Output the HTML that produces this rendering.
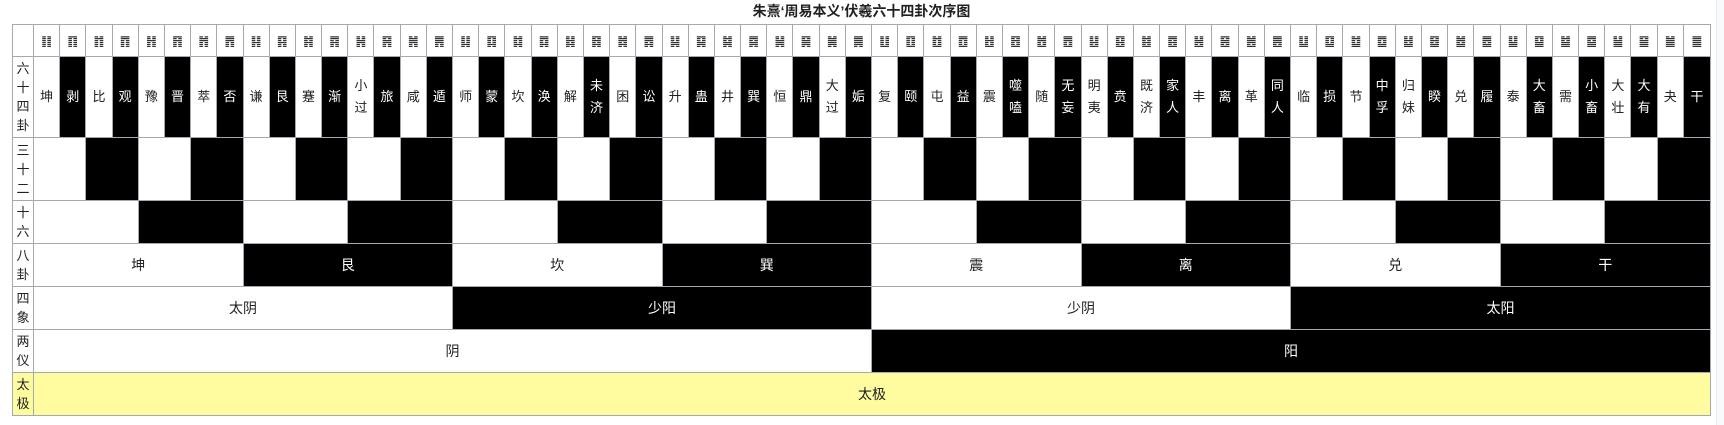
<!DOCTYPE html>
<html><head><meta charset="utf-8"><style>
html,body{margin:0;padding:0;background:#fff;width:1724px;height:425px;overflow:hidden;font-family:"Liberation Sans","Noto Sans CJK SC",sans-serif;color:#202122}
.sb{position:absolute;left:1716px;top:0;width:8px;height:425px;background:#f8f9fa;border-left:1px solid #eaecf0}
.title{position:absolute;left:12px;top:1px;width:1699px;text-align:center;font-weight:bold;font-size:14px;line-height:20px;color:#202122}
table{position:absolute;left:12px;top:24px;border-collapse:collapse;table-layout:fixed;width:1699px}
td{border:1px solid #a2a9b1;padding:0;text-align:center;vertical-align:middle;font-size:13px;overflow:hidden}
.b{background:#000;color:#fff}
.y{background:#fffca0}
.l{font-size:13px;line-height:19px;color:#202122}
tr.h td{height:31px;font-family:"DejaVu Sans",sans-serif;font-size:12px;color:#333}
tr.r64 td{height:80px;line-height:22px}
tr.r32 td{height:62px}
tr.r16 td{height:42px}
tr.r8 td,tr.r4 td,tr.r2 td,tr.r1 td{height:42px;font-size:14px}
</style></head><body>
<div class="sb"></div>
<div class="title">朱熹‘周易本义’伏羲六十四卦次序图</div>
<table>
<colgroup><col style="width:21px"><col span="64" style="width:26.2px"></colgroup>
<tr class="h"><td></td>
<td>䷁</td><td>䷖</td><td>䷇</td><td>䷓</td><td>䷏</td><td>䷢</td><td>䷬</td><td>䷋</td>
<td>䷎</td><td>䷳</td><td>䷦</td><td>䷴</td><td>䷽</td><td>䷷</td><td>䷞</td><td>䷠</td>
<td>䷆</td><td>䷃</td><td>䷜</td><td>䷺</td><td>䷧</td><td>䷿</td><td>䷮</td><td>䷅</td>
<td>䷭</td><td>䷑</td><td>䷯</td><td>䷸</td><td>䷟</td><td>䷱</td><td>䷛</td><td>䷫</td>
<td>䷗</td><td>䷚</td><td>䷂</td><td>䷩</td><td>䷲</td><td>䷔</td><td>䷐</td><td>䷘</td>
<td>䷣</td><td>䷕</td><td>䷾</td><td>䷤</td><td>䷶</td><td>䷝</td><td>䷰</td><td>䷌</td>
<td>䷒</td><td>䷨</td><td>䷻</td><td>䷼</td><td>䷵</td><td>䷥</td><td>䷹</td><td>䷉</td>
<td>䷊</td><td>䷙</td><td>䷄</td><td>䷈</td><td>䷡</td><td>䷍</td><td>䷪</td><td>䷀</td>
</tr>
<tr class="r64"><td class="l" style="line-height:19px">六<br>十<br>四<br>卦</td>
<td>坤</td><td class="b">剥</td><td>比</td><td class="b">观</td><td>豫</td><td class="b">晋</td><td>萃</td><td class="b">否</td>
<td>谦</td><td class="b">艮</td><td>蹇</td><td class="b">渐</td><td>小<br>过</td><td class="b">旅</td><td>咸</td><td class="b">遁</td>
<td>师</td><td class="b">蒙</td><td>坎</td><td class="b">涣</td><td>解</td><td class="b">未<br>济</td><td>困</td><td class="b">讼</td>
<td>升</td><td class="b">蛊</td><td>井</td><td class="b">巽</td><td>恒</td><td class="b">鼎</td><td>大<br>过</td><td class="b">姤</td>
<td>复</td><td class="b">颐</td><td>屯</td><td class="b">益</td><td>震</td><td class="b">噬<br>嗑</td><td>随</td><td class="b">无<br>妄</td>
<td>明<br>夷</td><td class="b">贲</td><td>既<br>济</td><td class="b">家<br>人</td><td>丰</td><td class="b">离</td><td>革</td><td class="b">同<br>人</td>
<td>临</td><td class="b">损</td><td>节</td><td class="b">中<br>孚</td><td>归<br>妹</td><td class="b">睽</td><td>兑</td><td class="b">履</td>
<td>泰</td><td class="b">大<br>畜</td><td>需</td><td class="b">小<br>畜</td><td>大<br>壮</td><td class="b">大<br>有</td><td>夬</td><td class="b">干</td>
</tr>
<tr class="r32"><td class="l">三<br>十<br>二</td>
<td colspan="2"></td><td colspan="2" class="b"></td><td colspan="2"></td><td colspan="2" class="b"></td>
<td colspan="2"></td><td colspan="2" class="b"></td><td colspan="2"></td><td colspan="2" class="b"></td>
<td colspan="2"></td><td colspan="2" class="b"></td><td colspan="2"></td><td colspan="2" class="b"></td>
<td colspan="2"></td><td colspan="2" class="b"></td><td colspan="2"></td><td colspan="2" class="b"></td>
<td colspan="2"></td><td colspan="2" class="b"></td><td colspan="2"></td><td colspan="2" class="b"></td>
<td colspan="2"></td><td colspan="2" class="b"></td><td colspan="2"></td><td colspan="2" class="b"></td>
<td colspan="2"></td><td colspan="2" class="b"></td><td colspan="2"></td><td colspan="2" class="b"></td>
<td colspan="2"></td><td colspan="2" class="b"></td><td colspan="2"></td><td colspan="2" class="b"></td>
</tr>
<tr class="r16"><td class="l">十<br>六</td>
<td colspan="4"></td><td colspan="4" class="b"></td><td colspan="4"></td><td colspan="4" class="b"></td>
<td colspan="4"></td><td colspan="4" class="b"></td><td colspan="4"></td><td colspan="4" class="b"></td>
<td colspan="4"></td><td colspan="4" class="b"></td><td colspan="4"></td><td colspan="4" class="b"></td>
<td colspan="4"></td><td colspan="4" class="b"></td><td colspan="4"></td><td colspan="4" class="b"></td>
</tr>
<tr class="r8"><td class="l" style="font-size:13px">八<br>卦</td>
<td colspan="8">坤</td><td colspan="8" class="b">艮</td><td colspan="8">坎</td><td colspan="8" class="b">巽</td>
<td colspan="8">震</td><td colspan="8" class="b">离</td><td colspan="8">兑</td><td colspan="8" class="b">干</td>
</tr>
<tr class="r4"><td class="l" style="font-size:13px">四<br>象</td>
<td colspan="16">太阴</td><td colspan="16" class="b">少阳</td><td colspan="16">少阴</td><td colspan="16" class="b">太阳</td>
</tr>
<tr class="r2"><td class="l" style="font-size:13px">两<br>仪</td>
<td colspan="32">阴</td><td colspan="32" class="b">阳</td>
</tr>
<tr class="r1"><td class="l y" style="font-size:13px">太<br>极</td>
<td colspan="64" class="y">太极</td>
</tr>
</table>
</body></html>
